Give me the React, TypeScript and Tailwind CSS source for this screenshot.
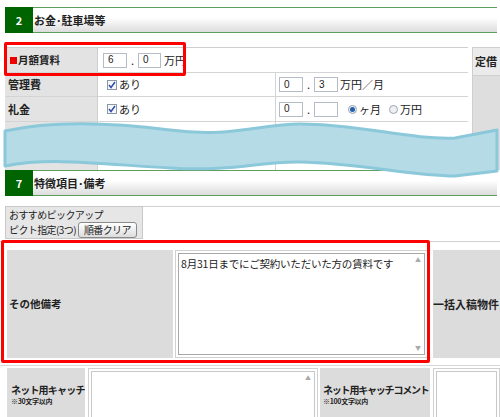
import React from "react";

const F = { fontFamily: '"Noto Sans CJK JP", "Noto Sans", sans-serif' };

function Inp({ v, w = 24 }: { v?: string; w?: number }) {
  return (
    <span
      className="inline-flex items-center h-[15px] border border-[#b4bcc8] bg-white pl-[4px] text-[10px] text-[#222] leading-none"
      style={{ width: w, fontFamily: '"Liberation Sans", sans-serif' }}
    >
      {v}
    </span>
  );
}

function Check() {
  return (
    <span className="inline-flex items-center justify-center w-[10px] h-[10px] border border-[#8c98a8] bg-[#f4f6f8]">
      <svg width="8" height="8" viewBox="0 0 8 8">
        <path d="M1 4 L3 6.5 L7 1" stroke="#2a4aa8" strokeWidth="1.4" fill="none" />
      </svg>
    </span>
  );
}

function Radio({ on }: { on?: boolean }) {
  return (
    <span className="inline-flex items-center justify-center w-[9px] h-[9px] rounded-full border border-[#9aa4b0] bg-[#eef0f2]">
      {on && <span className="w-[5px] h-[5px] rounded-full bg-[#2060b0]" />}
    </span>
  );
}

function Scroll({ down = true }: { down?: boolean }) {
  return (
    <div className="w-[12px] h-full flex flex-col justify-between items-center py-[3px] text-[#aaa] text-[6px] leading-none">
      <span>▲</span>
      {down && <span>▼</span>}
    </div>
  );
}

function Header({ n, t }: { n: string; t: string }) {
  return (
    <div className="flex h-[26px] border-y border-[#5e9e5e] bg-[linear-gradient(#ffffff_40%,#dcdcdc)]">
      <div className="w-[28px] -my-px bg-[#006400] text-white font-bold text-[11px] flex items-center justify-center">{n}</div>
      <div className="pl-[1px] flex items-center font-bold text-[11px] text-[#222] whitespace-nowrap">{t}</div>
    </div>
  );
}

export default function App() {
  return (
    <div className="relative w-[500px] h-[417px] overflow-hidden bg-white text-[#222] whitespace-nowrap" style={F}>
      <div className="pt-[7px] pl-[5px] w-[497px]">
        <Header n="2" t="お金･駐車場等" />
      </div>

      <div className="mt-[14px] pl-[5px] flex h-[123px] overflow-hidden">
        <div className="w-[463px] border-t border-[#cfcfcf] text-[11px]">
          <div className="flex h-[25px] border-b border-[#d4d4d4]">
            <div className="w-[93px] bg-[#e3e3e3] border-r border-[#cfcfcf] pl-[5px] flex items-center font-bold text-[10.5px]">
              <span className="w-[7px] h-[7px] bg-[#ee0000] mr-[1px]" />月額賃料
            </div>
            <div className="flex-1 flex items-center pl-[5px]">
              <Inp v="6" />
              <span className="mx-[4px]">.</span>
              <Inp v="0" w={23} />
              <span className="ml-[3px]">万円</span>
            </div>
          </div>
          <div className="flex h-[24px] border-b border-[#d4d4d4]">
            <div className="w-[93px] bg-[#e3e3e3] border-r border-[#cfcfcf] pl-[3px] flex items-center font-bold text-[11px]">管理費</div>
            <div className="w-[178px] border-r border-[#d4d4d4] flex items-center pl-[9px] gap-[2px]">
              <Check />あり
            </div>
            <div className="flex-1 flex items-center pl-[3px]">
              <Inp v="0" />
              <span className="mx-[4px]">.</span>
              <Inp v="3" />
              <span className="ml-[2px]">万円／月</span>
            </div>
          </div>
          <div className="flex h-[25px] border-b border-[#d4d4d4]">
            <div className="w-[93px] bg-[#e3e3e3] border-r border-[#cfcfcf] pl-[3px] flex items-center font-bold text-[11px]">礼金</div>
            <div className="w-[178px] border-r border-[#d4d4d4] flex items-center pl-[9px] gap-[2px]">
              <Check />あり
            </div>
            <div className="flex-1 flex items-center pl-[3px]">
              <Inp v="0" />
              <span className="mx-[4px]">.</span>
              <Inp />
              <span className="ml-[10px] flex items-center gap-[2px]"><Radio on />ヶ月</span>
              <span className="ml-[8px] flex items-center gap-[2px]"><Radio />万円</span>
            </div>
          </div>
          <div className="flex h-[25px] border-b border-[#d4d4d4]">
            <div className="w-[93px] bg-[#e3e3e3] border-r border-[#cfcfcf]" />
            <div className="w-[178px] border-r border-[#d4d4d4]" />
            <div className="flex-1" />
          </div>
          <div className="flex h-[25px]">
            <div className="w-[93px] bg-[#e3e3e3] border-r border-[#cfcfcf]" />
            <div className="w-[178px] border-r border-[#d4d4d4]" />
            <div className="flex-1" />
          </div>
        </div>
        <div className="ml-[4px] w-[28px] flex flex-col border-l border-[#cfcfcf]">
          <div className="h-[29px] bg-[#ebebeb] border-y border-[#cfcfcf] flex items-center pl-[2px] font-bold text-[11px]">定借</div>
          <div className="flex-1 bg-[#dedede]" />
        </div>
      </div>

      <div className="pl-[5px] w-[497px]">
        <Header n="7" t="特徴項目･備考" />
      </div>

      <div className="mt-[10px] pl-[5px] flex h-[33px]">
        <div className="w-[138px] bg-[#e6e6e6] border border-[#c8c8c8] pl-[3px] pt-[1px] text-[10px] leading-[14px] tracking-[-0.6px]">
          <div>おすすめピックアップ</div>
          <div className="flex items-center">
            <span>ピクト指定(3つ)</span>
            <span className="ml-[2px] h-[16px] px-[5px] rounded-[3px] border border-[#8a8a8a] bg-[linear-gradient(#ffffff,#dcdcdc)] flex items-center text-[10px]">順番クリア</span>
          </div>
        </div>
        <div className="flex-1 border-t border-[#d0d0d0]" />
      </div>

      <div className="mt-[2px] border-t border-[#d0d0d0] pt-[8px] pl-[7px] flex h-[117px]">
        <div className="w-[166px] bg-[#dcdcdc] flex items-center pl-[2px] font-bold text-[10.5px]">その他備考</div>
        <div className="ml-[2px] w-[253px] border border-[#d0d0d0] p-[2px]">
          <div className="h-full border border-[#a8a8a8] bg-white flex">
            <div className="flex-1 pl-[2px] pt-[2px] text-[10.5px] tracking-[-0.2px]">8月31日までにご契約いただいた方の賃料です</div>
            <Scroll />
          </div>
        </div>
        <div className="ml-[5px] flex-1 bg-[#dcdcdc] flex items-center font-bold text-[11px] overflow-hidden">一括入稿物件</div>
      </div>

      <div className="mt-[7px] pl-[7px] flex h-[60px] border-t border-[#d8d8d8] pt-[2px]">
        <div className="w-[78px] bg-[#dcdcdc] pt-[15px] pl-[4px] font-bold overflow-hidden">
          <div className="text-[10px] leading-[13px] tracking-[-0.8px]">ネット用キャッチ</div>
          <div className="mt-[1px] text-[7px] leading-[9px] tracking-[-0.3px]">※30文字以内</div>
        </div>
        <div className="ml-[3px] w-[230px] border border-[#d0d0d0] p-[2px]">
          <div className="h-[60px] border border-[#c8c8c8] bg-white flex justify-end">
            <Scroll down={false} />
          </div>
        </div>
        <div className="ml-[2px] w-[110px] bg-[#dcdcdc] pt-[15px] pl-[3px] font-bold overflow-hidden">
          <div className="text-[10px] leading-[13px] tracking-[-1.2px]">ネット用キャッチコメント</div>
          <div className="mt-[1px] text-[7px] leading-[9px] tracking-[-0.3px]">※100文字以内</div>
        </div>
        <div className="ml-[3px] flex-1 border border-[#d0d0d0] p-[2px]">
          <div className="h-[60px] border border-[#c8c8c8] bg-white" />
        </div>
      </div>

      <svg className="absolute left-0 top-0 pointer-events-none" width="500" height="417">
        <path
          d="M5 131 C 45 122, 100 121, 170 130 C 230 138, 260 124, 300 124 C 360 124, 410 140, 455 138 L 497 130 L 497 171 L 455 176 C 410 176, 360 163, 300 162 C 260 161, 235 172, 170 168 C 100 164, 50 157, 5 166 Z"
          fill="#b5dce6"
          stroke="#8ac8da"
          strokeWidth="3"
          strokeLinejoin="round"
        />
      </svg>

      <div className="absolute left-[4px] top-[42px] w-[182px] h-[34px] border-[3px] border-[#ff0000] rounded-[2px]" />
      <div className="absolute left-[1px] top-[240px] w-[429px] h-[123px] border-[3px] border-[#ff0000] rounded-[2px]" />
    </div>
  );
}
